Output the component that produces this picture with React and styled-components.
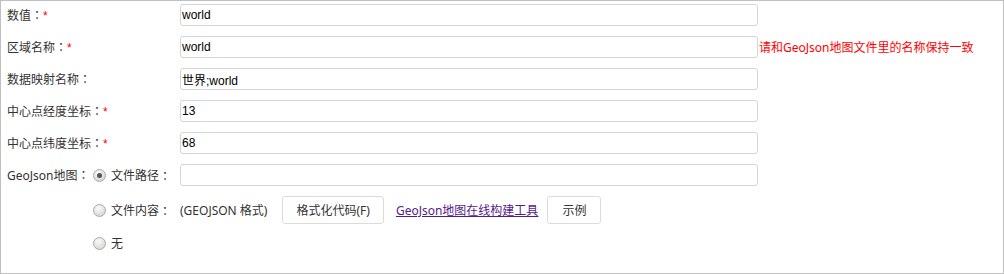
import React, { useState } from 'react';
import styled, { createGlobalStyle } from 'styled-components';

const GlobalStyle = createGlobalStyle`
  html, body {
    margin: 0;
    padding: 0;
    background: #fff;
  }
  * {
    box-sizing: border-box;
  }
`;

const Panel = styled.div`
  width: 1004px;
  height: 274px;
  border: 1px solid #c0c0c0;
  padding: 3px 6px;
  font-family: "Noto Sans", "Noto Sans CJK SC", sans-serif;
  font-size: 12px;
  color: #333;
  background: #fff;
`;

const FieldRow = styled.div`
  display: grid;
  grid-template-columns: 173px 578px auto;
  align-items: center;
  height: 22px;
  margin-bottom: 10px;
`;

const Label = styled.span`
  white-space: nowrap;
`;

// full-width colon, centred as in the original font
const Colon = styled.span`
  font-family: "Noto Sans CJK TC", sans-serif;
`;

const Star = styled.span`
  color: #ff0000;
  font-family: "Liberation Sans", sans-serif;
  font-size: 12px;
`;

const TextInput = styled.input`
  height: 22px;
  width: ${(p) => p.$width || '578px'};
  border: 1px solid #d6d6d6;
  border-radius: 3px;
  padding: 0 1px;
  font-family: "Liberation Sans", "Noto Sans CJK SC", sans-serif;
  font-size: 12px;
  color: #000;
  outline: none;
  background: #fff;
`;

const Hint = styled.span`
  color: #ff0000;
  white-space: nowrap;
  padding-left: 1px;
`;

const GeoBlock = styled.div`
  display: flex;
  align-items: flex-start;
`;

const GeoLabel = styled.span`
  width: 86px;
  height: 22px;
  line-height: 22px;
  white-space: nowrap;
`;

const Options = styled.div`
  display: flex;
  flex-direction: column;
`;

const OptionRow = styled.div`
  display: flex;
  align-items: center;
  height: ${(p) => p.$height || '22px'};
  margin-bottom: ${(p) => p.$gap || '0'};
`;

const RadioLabel = styled.label`
  display: flex;
  align-items: center;
  width: 87px;
  white-space: nowrap;
  cursor: pointer;
`;

const RadioDot = styled.span`
  position: relative;
  width: 13px;
  height: 13px;
  border-radius: 50%;
  border: 1px solid #aaaaaa;
  background: radial-gradient(circle at 40% 30%, #fafafa 0%, #e2e2e2 55%, #c8c8c8 100%);
  margin-right: 5px;
  flex: none;

  &::after {
    content: '';
    display: ${(p) => (p.$checked ? 'block' : 'none')};
    position: absolute;
    left: 3px;
    top: 3px;
    width: 5px;
    height: 5px;
    border-radius: 50%;
    background: #555;
  }
`;

const Note = styled.span`
  margin-right: 15px;
  white-space: nowrap;
`;

const Button = styled.button`
  height: 28px;
  padding: 0 ${(p) => p.$pad || '14px'};
  border: 1px solid #dcdcdc;
  border-radius: 3px;
  background: #fff;
  color: #333;
  font-family: "Noto Sans", "Noto Sans CJK SC", sans-serif;
  font-size: 12px;
  cursor: pointer;
`;

const ToolLink = styled.a`
  color: #551a8b;
  text-decoration: underline;
  margin: 0 9px 0 12px;
  white-space: nowrap;
`;

const fields = [
  { label: '数值', required: true, value: 'world' },
  { label: '区域名称', required: true, value: 'world', hint: '请和GeoJson地图文件里的名称保持一致' },
  { label: '数据映射名称', required: false, value: '世界;world' },
  { label: '中心点经度坐标', required: true, value: '13' },
  { label: '中心点纬度坐标', required: true, value: '68' },
];

export default function App() {
  const [source, setSource] = useState('path');

  return (
    <>
      <GlobalStyle />
      <Panel>
        {fields.map((f) => (
          <FieldRow key={f.label}>
            <Label>
              {f.label}
              <Colon>：</Colon>
              {f.required && <Star>*</Star>}
            </Label>
            <TextInput defaultValue={f.value} />
            {f.hint ? <Hint>{f.hint}</Hint> : <span />}
          </FieldRow>
        ))}
        <GeoBlock>
          <GeoLabel>
            GeoJson地图<Colon>：</Colon>
          </GeoLabel>
          <Options>
            <OptionRow $gap="10px">
              <RadioLabel onClick={() => setSource('path')}>
                <RadioDot $checked={source === 'path'} />
                文件路径<Colon>：</Colon>
              </RadioLabel>
              <TextInput />
            </OptionRow>
            <OptionRow $height="28px" $gap="8px">
              <RadioLabel onClick={() => setSource('content')}>
                <RadioDot $checked={source === 'content'} />
                文件内容<Colon>：</Colon>
              </RadioLabel>
              <Note>(GEOJSON 格式)</Note>
              <Button $pad="13px">格式化代码(F)</Button>
              <ToolLink href="#">GeoJson地图在线构建工具</ToolLink>
              <Button $pad="14px">示例</Button>
            </OptionRow>
            <OptionRow>
              <RadioLabel onClick={() => setSource('none')}>
                <RadioDot $checked={source === 'none'} />
                无
              </RadioLabel>
            </OptionRow>
          </Options>
        </GeoBlock>
      </Panel>
    </>
  );
}
